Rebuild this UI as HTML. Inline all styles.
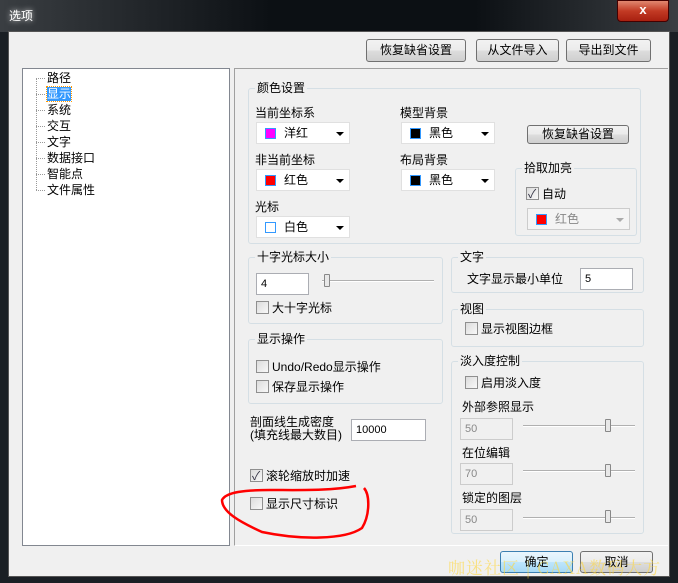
<!DOCTYPE html>
<html><head><meta charset="utf-8"><style>
*{margin:0;padding:0;box-sizing:border-box}
body{width:678px;height:583px;background:#1a1f24;font-family:"Liberation Sans","Noto Sans CJK SC",sans-serif;font-size:12px;color:#000;position:relative;overflow:hidden}
.a{position:absolute}
.btn{position:absolute;border:1px solid #707070;border-radius:3px;background:linear-gradient(#f2f2f2,#ebebeb 50%,#dddddd 51%,#cfcfcf);text-align:center;line-height:20px;font-size:12px}
.grp{position:absolute;border:1px solid #d5dfe5;border-radius:3px}
.gl{position:absolute;top:-9px;left:6px;background:#f0f0f0;padding:0 2px;line-height:16px}
.combo{position:absolute;background:#fff;border:1px solid #e0e0e0;height:22px;width:94px}
.sw{position:absolute;left:8px;top:5px;width:11px;height:11px;border:1px solid #3399ff}
.ct{position:absolute;left:27px;top:3px;line-height:15px}
.arr{position:absolute;right:5px;top:9px;width:0;height:0;border-left:4px solid transparent;border-right:4px solid transparent;border-top:4px solid #000}
.cb{position:absolute;width:13px;height:13px;border:1px solid #8f8f8f;background:linear-gradient(135deg,#dcdcdc,#f8f8f8)}
.inp{position:absolute;background:#fff;border:1px solid #abadb3;height:22px;line-height:20px;padding-left:4px;font-size:11px}
.dis{background:#f0f0f0;color:#888;border-color:#ccc}
.track{position:absolute;height:2px;border-top:1px solid #b0b0b0;border-bottom:1px solid #fff}
.th{position:absolute;width:6px;height:13px;border:1px solid #888;background:#e8e8e8;border-radius:1px}
.ti{position:relative;height:16px;padding-left:11px}
.ti:before{content:"";position:absolute;left:0;top:8px;width:9px;border-top:1px dotted #999}
</style></head><body>
<div class="a" style="left:0;top:0;width:678px;height:32px;background:linear-gradient(90deg,#3a3e42,#0c1014 40%,#0c1014 70%,#3a3e42)"></div>
<div class="a" style="left:9px;top:7px;color:#fff;font-size:12px;text-shadow:0 0 6px #fff">选项</div>
<div class="a" style="left:617px;top:0;width:52px;height:22px;border-radius:0 0 4px 4px;background:linear-gradient(#e08870,#c23a24 50%,#a82010);border:1px solid #400"><div style="color:#fff;font-weight:bold;text-align:center;line-height:18px;font-size:13px">x</div></div>
<div class="a" style="left:8px;top:31px;width:662px;height:546px;background:#f0f0f0;border:1px solid #555"></div>
<div class="btn" style="left:366px;top:39px;width:100px;height:23px">恢复缺省设置</div>
<div class="btn" style="left:476px;top:39px;width:83px;height:23px">从文件导入</div>
<div class="btn" style="left:566px;top:39px;width:85px;height:23px">导出到文件</div>
<div class="a" style="left:22px;top:68px;width:208px;height:478px;background:#fff;border:1px solid #828790"></div>
<div class="a" style="left:36px;top:70px;line-height:16px">
<div style="border-left:1px dotted #999;position:absolute;left:0;top:8px;height:112px"></div>
<div class="ti">路径</div><div class="ti"><span style="background:#3399ff;color:#fff;outline:1px dotted #f90">显示</span></div><div class="ti">系统</div><div class="ti">交互</div><div class="ti">文字</div><div class="ti">数据接口</div><div class="ti">智能点</div><div class="ti">文件属性</div></div>
<div class="a" style="left:234px;top:68px;width:434px;height:478px;border:1px solid #a0a0a0;border-right:none;border-bottom-color:#fff"></div>

<div class="grp" style="left:248px;top:88px;width:393px;height:156px"><div class="gl">颜色设置</div></div>
<div class="a" style="left:255px;top:104px">当前坐标系</div>
<div class="combo" style="left:256px;top:122px"><div class="sw" style="background:#f0f"></div><div class="ct">洋红</div><div class="arr"></div></div>
<div class="a" style="left:255px;top:151px">非当前坐标</div>
<div class="combo" style="left:256px;top:169px"><div class="sw" style="background:#f00"></div><div class="ct">红色</div><div class="arr"></div></div>
<div class="a" style="left:255px;top:198px">光标</div>
<div class="combo" style="left:256px;top:216px"><div class="sw" style="background:#fff"></div><div class="ct">白色</div><div class="arr"></div></div>
<div class="a" style="left:400px;top:104px">模型背景</div>
<div class="combo" style="left:401px;top:122px"><div class="sw" style="background:#000"></div><div class="ct">黑色</div><div class="arr"></div></div>
<div class="a" style="left:400px;top:151px">布局背景</div>
<div class="combo" style="left:401px;top:169px"><div class="sw" style="background:#000"></div><div class="ct">黑色</div><div class="arr"></div></div>
<div class="btn" style="left:527px;top:125px;width:102px;height:19px;line-height:17px">恢复缺省设置</div>
<div class="grp" style="left:515px;top:168px;width:122px;height:68px"><div class="gl">拾取加亮</div></div>
<div class="cb" style="left:526px;top:187px"><span style="position:absolute;left:1px;top:-3px;color:#334;font-size:12px">✓</span></div>
<div class="a" style="left:542px;top:185px">自动</div>
<div class="combo" style="left:527px;top:208px;width:103px;border-color:#ccc;background:#f4f4f4"><div class="sw" style="background:#f00"></div><div class="ct" style="color:#888">红色</div><div class="arr" style="border-top-color:#aaa"></div></div>

<div class="grp" style="left:248px;top:257px;width:195px;height:67px"><div class="gl">十字光标大小</div></div>
<div class="inp" style="left:256px;top:273px;width:53px">4</div>
<div class="track" style="left:322px;top:280px;width:112px"></div><div class="th" style="left:324px;top:274px"></div>
<div class="cb" style="left:256px;top:301px"></div><div class="a" style="left:272px;top:299px">大十字光标</div>
<div class="grp" style="left:248px;top:339px;width:195px;height:65px"><div class="gl">显示操作</div></div>
<div class="cb" style="left:256px;top:360px"></div><div class="a" style="left:272px;top:358px">Undo/Redo显示操作</div>
<div class="cb" style="left:256px;top:380px"></div><div class="a" style="left:272px;top:378px">保存显示操作</div>
<div class="a" style="left:250px;top:416px;line-height:13px">剖面线生成密度<br>(填充线最大数目)</div>
<div class="inp" style="left:351px;top:419px;width:75px">10000</div>
<div class="cb" style="left:250px;top:469px"><span style="position:absolute;left:1px;top:-3px;color:#334;font-size:12px">✓</span></div><div class="a" style="left:266px;top:467px">滚轮缩放时加速</div>
<div class="cb" style="left:250px;top:497px"></div><div class="a" style="left:266px;top:495px">显示尺寸标识</div>

<div class="grp" style="left:451px;top:257px;width:193px;height:36px"><div class="gl">文字</div></div>
<div class="a" style="left:467px;top:270px">文字显示最小单位</div>
<div class="inp" style="left:580px;top:268px;width:53px">5</div>
<div class="grp" style="left:451px;top:309px;width:193px;height:38px"><div class="gl">视图</div></div>
<div class="cb" style="left:465px;top:322px"></div><div class="a" style="left:481px;top:320px">显示视图边框</div>
<div class="grp" style="left:451px;top:361px;width:193px;height:173px"><div class="gl">淡入度控制</div></div>
<div class="cb" style="left:465px;top:376px"></div><div class="a" style="left:481px;top:374px">启用淡入度</div>
<div class="a" style="left:462px;top:398px">外部参照显示</div>
<div class="inp dis" style="left:460px;top:418px;width:53px">50</div>
<div class="track" style="left:523px;top:425px;width:112px"></div><div class="th" style="left:605px;top:419px"></div>
<div class="a" style="left:462px;top:444px">在位编辑</div>
<div class="inp dis" style="left:460px;top:463px;width:53px">70</div>
<div class="track" style="left:523px;top:470px;width:112px"></div><div class="th" style="left:605px;top:464px"></div>
<div class="a" style="left:462px;top:489px">锁定的图层</div>
<div class="inp dis" style="left:460px;top:509px;width:53px">50</div>
<div class="track" style="left:523px;top:517px;width:112px"></div><div class="th" style="left:605px;top:510px"></div>

<svg class="a" style="left:0;top:0" width="678" height="583"><path d="M356,486 C330,491 300,490 270,490 C245,490 226,492 222,500 C222,512 240,522 262,532 C300,540 345,540 362,528 C370,515 370,495 364,488" fill="none" stroke="#f00" stroke-width="2.5"/></svg>
<div class="btn" style="left:500px;top:551px;width:73px;height:22px;border-color:#3c7fb1;background:linear-gradient(#eaf6fd,#d9f0fc 50%,#bee6fd 51%,#a7d9f5)">确定</div>
<div class="btn" style="left:580px;top:551px;width:73px;height:22px">取消</div>
<div class="a" style="left:448px;top:554px;color:rgba(255,215,60,0.6);font-family:'Noto Serif CJK SC',serif;font-size:17px;letter-spacing:1px;white-space:nowrap">咖迷社区 | CAXA数码大方</div>
</body></html>
